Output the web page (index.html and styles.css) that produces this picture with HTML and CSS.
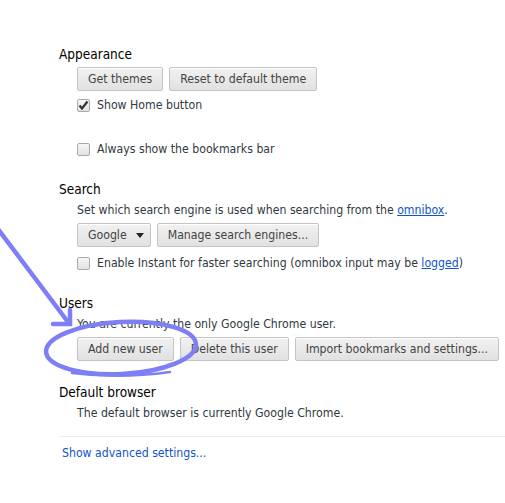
FILE: index.html
```html
<!DOCTYPE html>
<html>
<head>
<meta charset="utf-8">
<link rel="stylesheet" href="styles.css">
</head>
<body>
<div class="page">
  <section class="sec">
    <h3 class="sec-title">Appearance</h3>
    <div class="sec-body">
      <div class="btn-row">
        <button class="btn">Get themes</button>
        <button class="btn">Reset to default theme</button>
      </div>
      <label class="check first">
        <span class="box"><svg width="11" height="11" viewBox="0 0 11 11"><path d="M1.5 5.5 L4 8.5 L9.5 1.5" fill="none" stroke="#333" stroke-width="2.2"/></svg></span>
        <span>Show Home button</span>
      </label>
      <label class="check far">
        <span class="box"></span>
        <span>Always show the bookmarks bar</span>
      </label>
    </div>
  </section>

  <section class="sec">
    <h3 class="sec-title">Search</h3>
    <div class="sec-body">
      <p class="text">Set which search engine is used when searching from the <a class="link" href="#">omnibox</a>.</p>
      <div class="btn-row">
        <button class="btn select">Google<span class="caret"></span></button>
        <button class="btn">Manage search engines...</button>
      </div>
      <label class="check instant">
        <span class="box"></span>
        <span>Enable Instant for faster searching (omnibox input may be <a class="link" href="#">logged</a>)</span>
      </label>
    </div>
  </section>

  <section class="sec">
    <h3 class="sec-title">Users</h3>
    <div class="sec-body">
      <p class="text">You are currently the only Google Chrome user.</p>
      <div class="btn-row">
        <button class="btn">Add new user</button>
        <button class="btn">Delete this user</button>
        <button class="btn">Import bookmarks and settings...</button>
      </div>
    </div>
  </section>

  <section class="sec">
    <h3 class="sec-title">Default browser</h3>
    <div class="sec-body">
      <p class="text">The default browser is currently Google Chrome.</p>
    </div>
  </section>

  <div class="footer">
    <a class="adv" href="#">Show advanced settings...</a>
  </div>
</div>

<svg class="annot" width="505" height="503" viewBox="0 0 505 503">
  <g fill="none" stroke="#7f7ff5" stroke-width="4.5" stroke-linecap="round">
    <path d="M-2 229 L68 322"/>
    <path d="M70 310 L70 324 L53 324"/>
    <ellipse cx="121" cy="348" rx="75" ry="26" transform="rotate(-3 121 348)"/>
    <path d="M72 373 Q120 379 170 372" stroke-width="2.5"/>
  </g>
</svg>
</body>
</html>
```

FILE: styles.css
```css
html, body {
  margin: 0;
  padding: 0;
  background: #fff;
}
body {
  font-family: "DejaVu Sans Condensed", "DejaVu Sans", sans-serif;
  font-size: 12.2px;
  color: #303942;
  width: 505px;
  height: 503px;
  overflow: hidden;
  position: relative;
}
.page {
  display: flex;
  flex-direction: column;
  padding-top: 44px;
}
.sec {
  display: flex;
  flex-direction: column;
  padding-left: 59px;
  margin-bottom: 21px;
}
.sec-title {
  margin: 0;
  height: 20px;
  line-height: 20px;
  font-size: 13.5px;
  font-weight: normal;
  color: #000;
}
.sec-body {
  display: flex;
  flex-direction: column;
  padding-left: 18px;
}
.text {
  margin: 2px 0 0;
  height: 18px;
  line-height: 18px;
  white-space: nowrap;
}
.btn-row {
  display: flex;
  gap: 6px;
  margin-top: 3px;
}
.text + .btn-row {
  margin-top: 4px;
}
.btn {
  font: inherit;
  color: #444;
  height: 24px;
  padding: 0 10px;
  border: 1px solid #c4c4c4;
  border-radius: 2px;
  background: linear-gradient(#f1f1f1, #e1e1e1);
  box-shadow: inset 0 1px 0 #fff;
  display: flex;
  align-items: center;
  white-space: nowrap;
  flex-shrink: 0;
}
.select {
  padding: 0 6px 0 10px;
  gap: 9px;
}
.caret {
  width: 0;
  height: 0;
  border-left: 4px solid transparent;
  border-right: 4px solid transparent;
  border-top: 5px solid #222;
}
.check {
  display: flex;
  align-items: center;
  height: 18px;
  gap: 7px;
  white-space: nowrap;
}
.check.first { margin-top: 5px; }
.check.far { margin-top: 26px; }
.check.instant { margin-top: 7px; }
.box {
  width: 11px;
  height: 11px;
  border: 1px solid #aaa;
  border-radius: 2px;
  background: linear-gradient(#f6f6f6, #e2e2e2);
  display: flex;
  align-items: center;
  justify-content: center;
  flex-shrink: 0;
}
.link {
  color: #15c;
  text-decoration: underline;
}
.footer {
  margin-top: -7px;
  margin-left: 59px;
  border-top: 1px solid #eee;
  padding: 7px 0 0 3px;
  height: 18px;
  line-height: 18px;
}
.adv {
  color: #15c;
  text-decoration: none;
}
.annot {
  position: absolute;
  left: 0;
  top: 0;
  pointer-events: none;
}
```
